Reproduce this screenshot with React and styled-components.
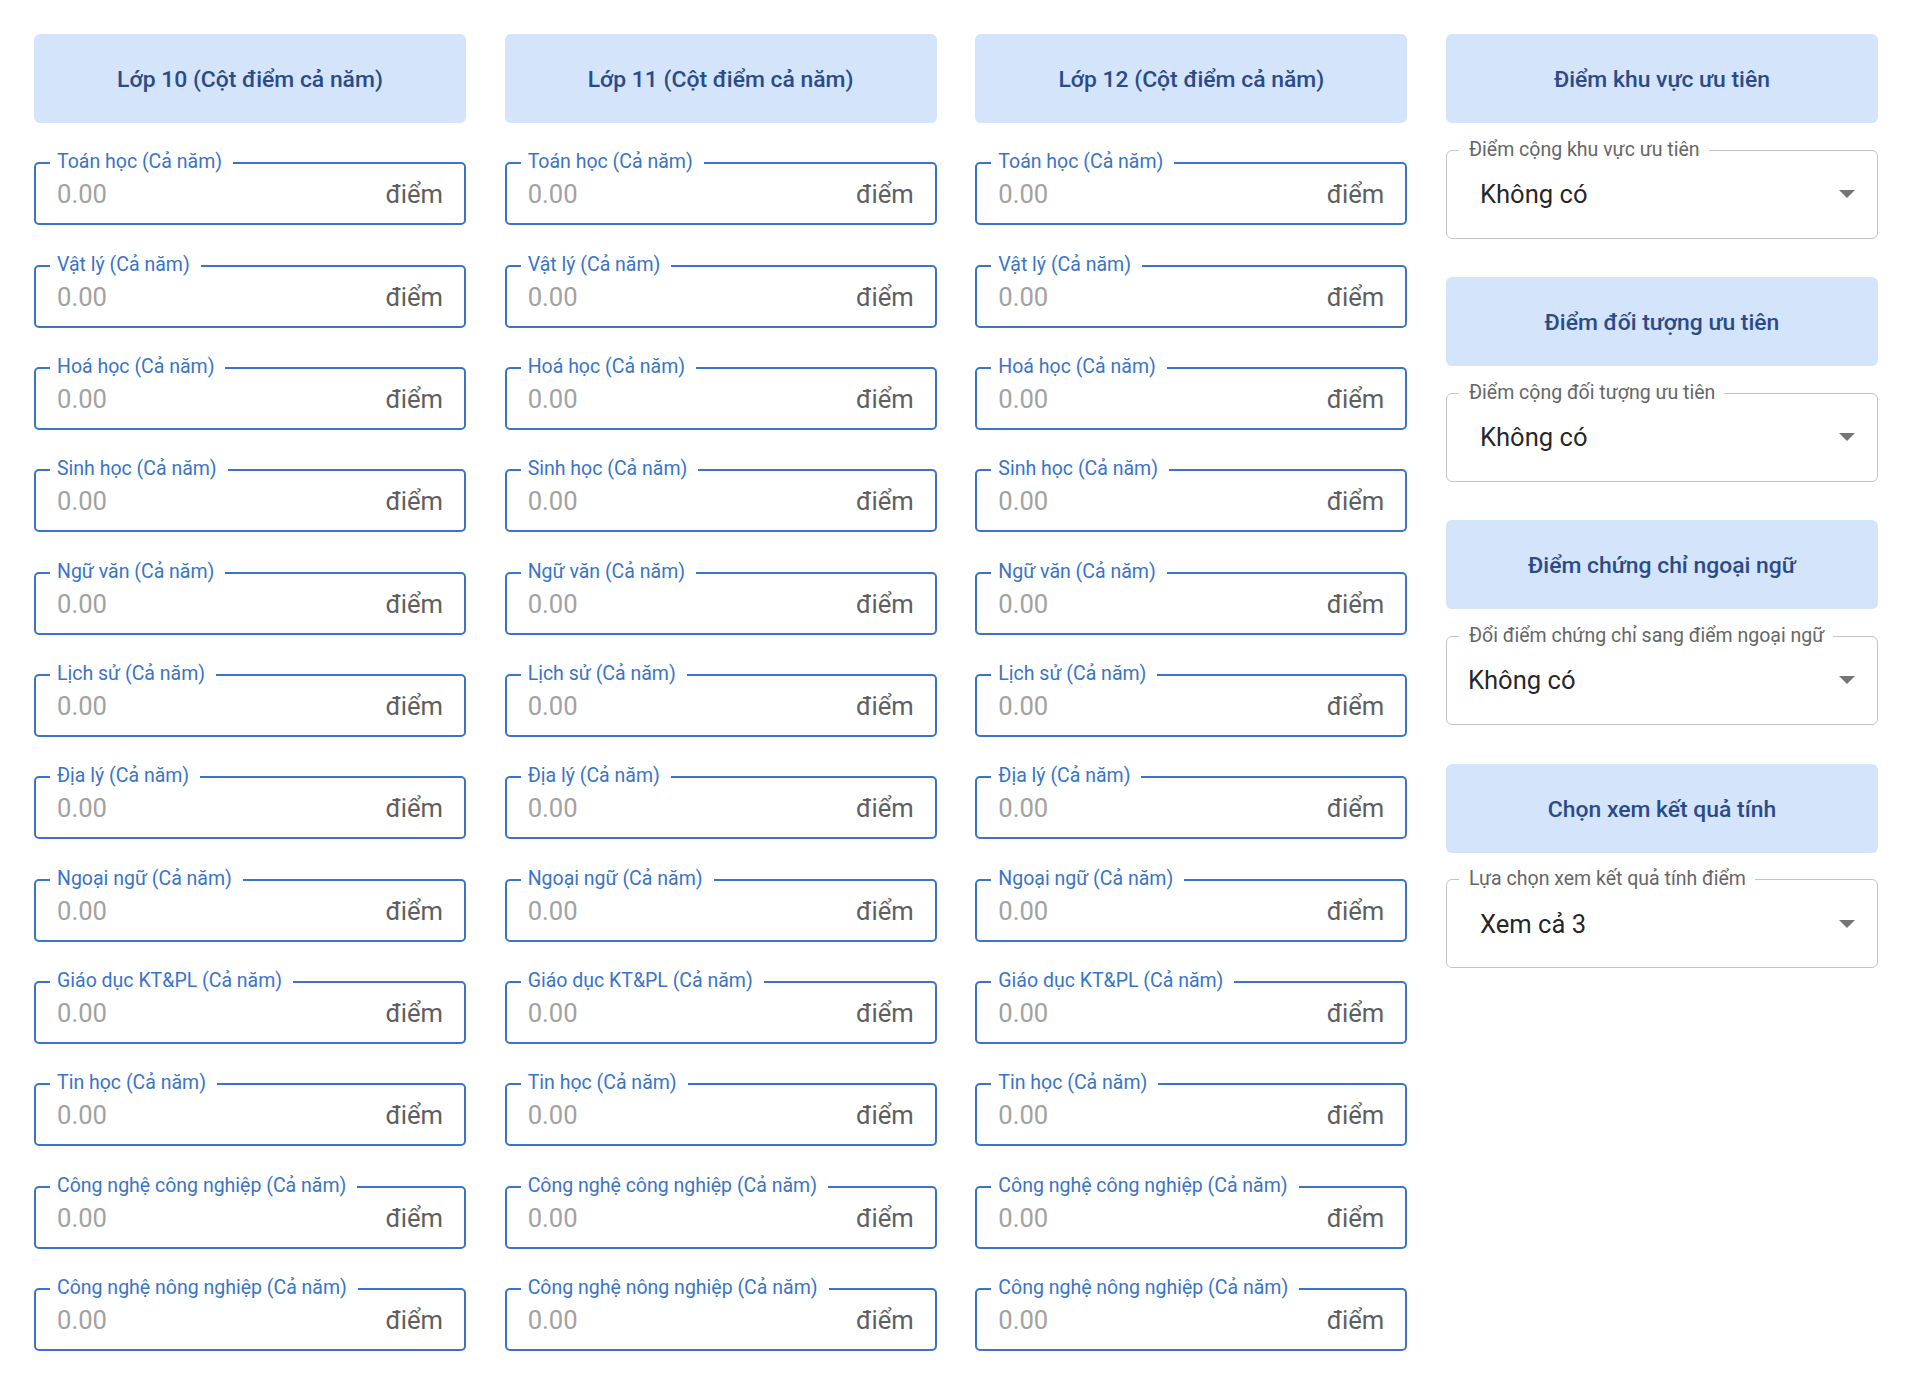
import React from "react";
import styled, { createGlobalStyle } from "styled-components";

const GlobalStyle = createGlobalStyle`
  body {
    margin: 0;
    background: #ffffff;
    font-family: Roboto, "Noto Sans", Arial, sans-serif;
  }
  * {
    box-sizing: border-box;
  }
`;

const Page = styled.div`
  display: grid;
  grid-template-columns: repeat(4, 432px);
  column-gap: 38.67px;
  align-items: start;
  padding: 34px 40px 42px 34px;
`;

const Column = styled.div`
  display: flex;
  flex-direction: column;
  gap: 39.33px;
`;

const SideColumn = styled.div`
  display: flex;
  flex-direction: column;
  gap: 38.7px;
`;

const Group = styled.div`
  display: flex;
  flex-direction: column;
  gap: 26.5px;
`;

const Header = styled.div`
  height: 89px;
  border-radius: 6px;
  background: #d3e4fb;
  display: flex;
  align-items: center;
  justify-content: center;
  padding-top: 2px;
  color: #2b4b88;
  font-size: 22.9px;
  font-weight: 500;
`;

const Field = styled.label`
  position: relative;
  height: 63px;
  border: 2px solid #3a74c8;
  border-radius: 5px;
  display: flex;
  align-items: center;
  padding: 1px 21px 0 21px;
`;

const FieldLabel = styled.span`
  position: absolute;
  top: -12px;
  left: 14px;
  padding: 0 11px 0 7px;
  background: #ffffff;
  color: #3a74c8;
  font-size: 19.5px;
  line-height: 1;
  white-space: nowrap;
`;

const Input = styled.input`
  flex: 1;
  min-width: 0;
  border: none;
  outline: none;
  background: transparent;
  padding: 0;
  font-family: inherit;
  font-size: 25.6px;
  color: rgba(0, 0, 0, 0.87);

  &::placeholder {
    color: #a2a2a2;
    opacity: 1;
  }
`;

const Unit = styled.span`
  font-size: 25.6px;
  color: #5f5f5f;
`;

const Select = styled.div`
  position: relative;
  height: 89px;
  border: 1px solid #c4c4c4;
  border-radius: 6px;
  display: flex;
  align-items: center;
  justify-content: space-between;
  padding: 0 22px 0 ${(p) => p.$indent}px;
`;

const SelectLabel = styled.span`
  position: absolute;
  top: -11px;
  left: 12px;
  padding: 0 9px 0 10px;
  background: #ffffff;
  color: #666666;
  font-size: 19.5px;
  line-height: 1;
  white-space: nowrap;
`;

const SelectValue = styled.span`
  font-size: 25.6px;
  color: rgba(0, 0, 0, 0.87);
`;

const Arrow = () => (
  <svg width="16" height="8" viewBox="0 0 16 8" aria-hidden="true">
    <path d="M0 0 L16 0 L8 8 Z" fill="#757575" />
  </svg>
);

const subjects = [
  "Toán học",
  "Vật lý",
  "Hoá học",
  "Sinh học",
  "Ngữ văn",
  "Lịch sử",
  "Địa lý",
  "Ngoại ngữ",
  "Giáo dục KT&PL",
  "Tin học",
  "Công nghệ công nghiệp",
  "Công nghệ nông nghiệp",
];

const grades = [10, 11, 12];

const options = [
  { title: "Điểm khu vực ưu tiên", label: "Điểm cộng khu vực ưu tiên", value: "Không có", indent: 33 },
  { title: "Điểm đối tượng ưu tiên", label: "Điểm cộng đối tượng ưu tiên", value: "Không có", indent: 33 },
  { title: "Điểm chứng chỉ ngoại ngữ", label: "Đổi điểm chứng chỉ sang điểm ngoại ngữ", value: "Không có", indent: 21 },
  { title: "Chọn xem kết quả tính", label: "Lựa chọn xem kết quả tính điểm", value: "Xem cả 3", indent: 33 },
];

const ScoreField = ({ subject }) => (
  <Field>
    <FieldLabel>{subject} (Cả năm)</FieldLabel>
    <Input type="text" placeholder="0.00" />
    <Unit>điểm</Unit>
  </Field>
);

const App = () => {
  return (
    <>
      <GlobalStyle />
      <Page>
        {grades.map((g) => (
          <Column key={g}>
            <Header>Lớp {g} (Cột điểm cả năm)</Header>
            {subjects.map((s) => (
              <ScoreField key={s} subject={s} />
            ))}
          </Column>
        ))}
        <SideColumn>
          {options.map((o) => (
            <Group key={o.title}>
              <Header>{o.title}</Header>
              <Select $indent={o.indent}>
                <SelectLabel>{o.label}</SelectLabel>
                <SelectValue>{o.value}</SelectValue>
                <Arrow />
              </Select>
            </Group>
          ))}
        </SideColumn>
      </Page>
    </>
  );
};

export default App;
